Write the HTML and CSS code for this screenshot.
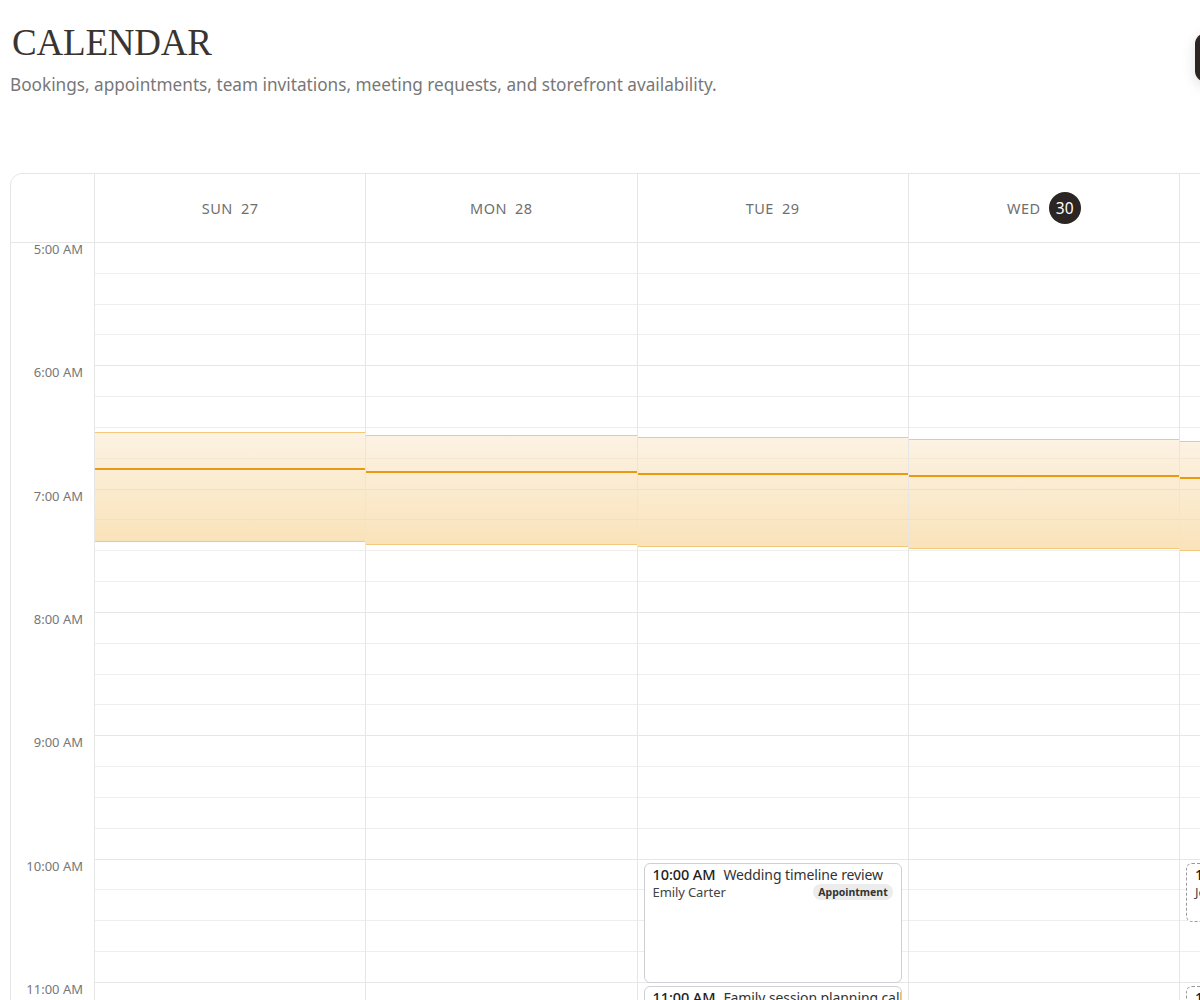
FILE: index.html
```html
<!DOCTYPE html>
<html lang="en">
<head>
    <meta charset="UTF-8" />
    <title>Calendar</title>
    <link rel="stylesheet" href="styles.css">
</head>
<body>
    <div class="page">
        <header class="page-head">
            <div class="head-text">
                <h1 class="title">CALENDAR</h1>
                <p class="subtitle">Bookings, appointments, team invitations, meeting requests, and storefront availability.</p>
            </div>
            <button class="new-btn">New booking</button>
        </header>

        <div class="calendar">
            <div class="cal-head">
                <div class="corner"></div>
                <div class="day-head">SUN <span class="num">27</span></div>
                <div class="day-head">MON <span class="num">28</span></div>
                <div class="day-head">TUE <span class="num">29</span></div>
                <div class="day-head">WED <span class="num today">30</span></div>
                <div class="day-head">THU <span class="num">31</span></div>
                <div class="day-head">FRI <span class="num">1</span></div>
                <div class="day-head">SAT <span class="num">2</span></div>
            </div>
            <div class="cal-body">
                <div class="times">
                    <div class="hour">5:00 AM</div>
                    <div class="hour">6:00 AM</div>
                    <div class="hour">7:00 AM</div>
                    <div class="hour">8:00 AM</div>
                    <div class="hour">9:00 AM</div>
                    <div class="hour">10:00 AM</div>
                    <div class="hour">11:00 AM</div>
                    <div class="hour">12:00 PM</div>
                </div>
                <div class="day-col">
                    <div class="now-band" style="top:189px"></div>
                </div>
                <div class="day-col">
                    <div class="now-band" style="top:192px"></div>
                </div>
                <div class="day-col">
                    <div class="now-band" style="top:194px"></div>
                    <div class="event" style="top:620px;height:120px">
                        <div class="ev-line">
                            <b>10:00 AM</b>
                            <span class="ev-title">Wedding timeline review</span>
                        </div>
                        <div class="ev-line ev-sub">
                            <span>Emily Carter</span>
                            <span class="badge">Appointment</span>
                        </div>
                    </div>
                    <div class="event" style="top:743px;height:120px">
                        <div class="ev-line">
                            <b>11:00 AM</b>
                            <span class="ev-title">Family session planning call</span>
                        </div>
                        <div class="ev-line ev-sub">
                            <span>Olivia Brooks</span>
                            <span class="badge">Booking</span>
                        </div>
                    </div>
                </div>
                <div class="day-col">
                    <div class="now-band" style="top:196px"></div>
                </div>
                <div class="day-col">
                    <div class="now-band" style="top:198px"></div>
                    <div class="event pending" style="top:620px;height:59px">
                        <div class="ev-line">
                            <b>10:00 AM</b>
                            <span class="ev-title">Team sync</span>
                        </div>
                        <div class="ev-line ev-sub">
                            <span>Jordan Lee</span>
                        </div>
                    </div>
                    <div class="event pending" style="top:743px;height:59px">
                        <div class="ev-line">
                            <b>11:00 AM</b>
                            <span class="ev-title">Meeting request</span>
                        </div>
                    </div>
                </div>
                <div class="day-col">
                    <div class="now-band" style="top:200px"></div>
                </div>
                <div class="day-col">
                    <div class="now-band" style="top:202px"></div>
                </div>
            </div>
        </div>
    </div>
</body>
</html>
```

FILE: styles.css
```css
*{
    margin:0;
    padding:0;
    box-sizing:border-box;
}
html, body{
    overflow:hidden;
    background:#fff;
}
body{
    font-family:"Noto Sans", "Liberation Sans", sans-serif;
    color:#2b2623;
}
.page{
    padding:0 10px;
    width:2010px;
}
.page-head{
    display:flex;
    align-items:flex-start;
    width:1325px;
    justify-content:space-between;
    height:173px;
}
.title{
    font-family:"Liberation Serif", serif;
    font-weight:normal;
    font-size:37px;
    line-height:40px;
    margin-top:23px;
    letter-spacing:-0.2px;
    color:#3a3431;
    padding-left:2px;
}
.subtitle{
    font-size:17.2px;
    color:#777;
    margin-top:11px;
    line-height:22px;
}
.new-btn{
    margin-top:33px;
    width:140px;
    height:49px;
    border:none;
    border-radius:11px;
    background:#2b2623;
    color:#fff;
    font-family:inherit;
    font-size:15px;
    box-shadow:0 4px 14px rgba(0,0,0,0.12);
}
.calendar{
    border:1px solid #e6e6e6;
    border-radius:12px;
    overflow:hidden;
    width:1986px;
}
.cal-head{
    display:grid;
    grid-template-columns:83px repeat(7, 271.25px);
    height:69px;
    border-bottom:1px solid #e6e6e6;
}
.day-head{
    border-left:1px solid #e6e6e6;
    display:flex;
    align-items:center;
    justify-content:center;
    gap:8px;
    font-size:14.5px;
    color:#6f6f6f;
    letter-spacing:0.5px;
}
.num{
    display:inline-flex;
    align-items:center;
    justify-content:center;
    height:32px;
    min-width:14px;
}
.num.today{
    width:32px;
    border-radius:50%;
    background:#2b2623;
    color:#fff;
    font-size:15.5px;
    letter-spacing:0;
}
.cal-body{
    display:grid;
    grid-template-columns:83px repeat(7, 271.25px);
    height:1850px;
}
.times{
    display:flex;
    flex-direction:column;
}
.hour{
    height:123.33px;
    flex-shrink:0;
    text-align:right;
    padding-right:11px;
    font-size:13px;
    line-height:12px;
    color:#777;
}
.day-col{
    position:relative;
    border-left:1px solid #e6e6e6;
    background:
        repeating-linear-gradient(to bottom, transparent 0, transparent 122.33px, #e6e6e6 122.33px, #e6e6e6 123.33px),
        repeating-linear-gradient(to bottom, transparent 0, transparent 29.83px, #eeeeee 29.83px, #eeeeee 30.83px);
}
.now-band{
    position:absolute;
    left:0;
    right:0;
    height:110px;
    border-top:1px solid #f3c77c;
    border-bottom:1px solid #f3c77c;
    background:linear-gradient(to bottom, rgba(250,232,204,0.55), rgba(245,208,140,0.6));
}
.now-band::after{
    content:"";
    position:absolute;
    left:0;
    right:0;
    top:35px;
    height:2px;
    background:#e99a12;
}
.event{
    position:absolute;
    left:6px;
    right:6px;
    background:#fff;
    border:1px solid #cfd0d4;
    border-radius:6px;
    padding:1px 8px;
    overflow:hidden;
}
.event.pending{
    border:1px dashed #999;
}
.ev-line{
    display:flex;
    align-items:center;
    gap:8px;
    white-space:nowrap;
    font-size:14px;
    letter-spacing:-0.1px;
    line-height:19px;
    color:#333;
}
.ev-line b{
    font-weight:500;
    font-size:14.5px;
    color:#222;
}
.ev-sub{
    justify-content:space-between;
    font-size:13px;
    line-height:16px;
    color:#444;
}
.badge{
    background:#ececec;
    border-radius:9px;
    padding:0 5px;
    font-size:10.5px;
    font-weight:700;
    line-height:16px;
    color:#333;
    letter-spacing:0;
}
```
